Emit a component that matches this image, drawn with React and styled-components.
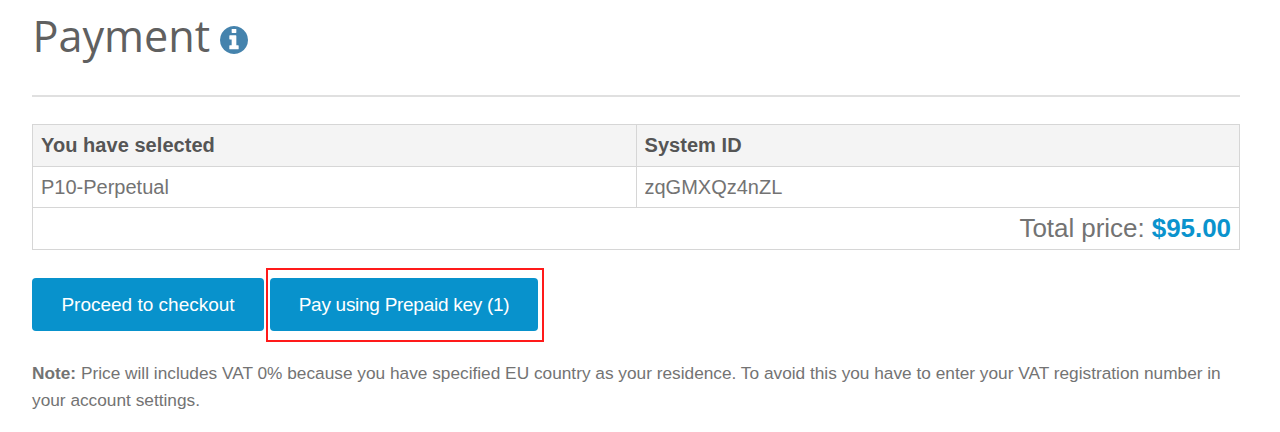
import React from "react";
import styled, { createGlobalStyle } from "styled-components";

const Global = createGlobalStyle`
  * { box-sizing: border-box; }
  body { margin: 0; background: #fff; color: #737373; font-family: "Liberation Sans", Arial, sans-serif; }
`;
const Page = styled.main`padding: 0 40px 0 32px; height: 432px; overflow: hidden;`;
const Header = styled.header`
  display: flex; align-items: flex-start; height: 97px; border-bottom: 2px solid #e0e0e0;
`;
const Title = styled.h1`
  margin: 6px 0 0; padding-left: 0.5px; font: 400 43.2px/60px "Open Sans", sans-serif; color: #606060;
`;
const InfoIcon = styled.svg`width: 28px; height: 28px; margin: 26px 0 0 10px;`;
const Table = styled.table`
  width: 100%; margin-top: 27px; border-collapse: collapse; table-layout: fixed; font-size: 20px;
`;
const Cell = styled.td`
  height: 41.5px; padding: 0 8px; border: 1px solid #d6d6d6; text-align: left; line-height: 28px;
`;
const HeadCell = styled(Cell).attrs({ as: "th" })`background: #f4f4f4; color: #555; font-weight: 700; letter-spacing: 0.05px;`;
const TotalCell = styled(Cell)`text-align: right; font-size: 26px; letter-spacing: -0.05px;`;
const Price = styled.strong`color: #0a93cd;`;
const Actions = styled.div`display: flex; align-items: flex-start; margin-top: 18px; gap: 2px;`;
const Button = styled.button`
  display: block; height: 53px; width: ${(p) => p.$width}px; padding: 2px 0 0; border: 0; border-radius: 4px; background: #0892cc;
  color: #fff; font: 400 19px "Liberation Sans", Arial, sans-serif; letter-spacing: ${(p) => p.$tracking || 0}px;
`;
const Plain = styled.div`padding-top: 10px;`;
const Highlight = styled.div`border: 2px solid #ff1a1a; padding: 8px 4px 9px 2px; height: 74px; width: 278px;`;
const Note = styled.p`margin: 18px 0 0; font-size: 17.27px; line-height: 27px; white-space: nowrap;`;

export default function App() {
  return (
    <Page>
      <Global />
      <Header>
        <Title>Payment</Title>
        <InfoIcon viewBox="0 0 1536 1536" aria-label="Information">
          <path fill="#4583ad" d="M1024 1248v-160q0-14-9-23t-23-9h-96V544q0-14-9-23t-23-9H544q-14 0-23 9t-9 23v160q0 14 9 23t23 9h96v320h-96q-14 0-23 9t-9 23v160q0 14 9 23t23 9h448q14 0 23-9t9-23zM896 352V192q0-14-9-23t-23-9H672q-14 0-23 9t-9 23v160q0 14 9 23t23 9h192q14 0 23-9t9-23zm640 416q0 209-103 385.500T1153.500 1433 768 1536t-385.500-103T103 1153.500 0 768t103-385.500T382.500 103 768 0t385.500 103T1433 382.500 1536 768z" />
        </InfoIcon>
      </Header>
      <Table>
        <thead><tr><HeadCell>You have selected</HeadCell><HeadCell>System ID</HeadCell></tr></thead>
        <tbody>
          <tr><Cell>P10-Perpetual</Cell><Cell>zqGMXQz4nZL</Cell></tr>
          <tr><TotalCell colSpan={2}>Total price: <Price>$95.00</Price></TotalCell></tr>
        </tbody>
      </Table>
      <Actions>
        <Plain><Button $width={232}>Proceed to checkout</Button></Plain>
        <Highlight><Button $width={268} $tracking={-0.28}>Pay using Prepaid key (1)</Button></Highlight>
      </Actions>
      <Note>
        <strong>Note:</strong> Price will includes VAT 0% because you have specified EU country as your residence. To avoid this you have to enter your VAT registration number in<br />your account settings.
      </Note>
    </Page>
  );
}
